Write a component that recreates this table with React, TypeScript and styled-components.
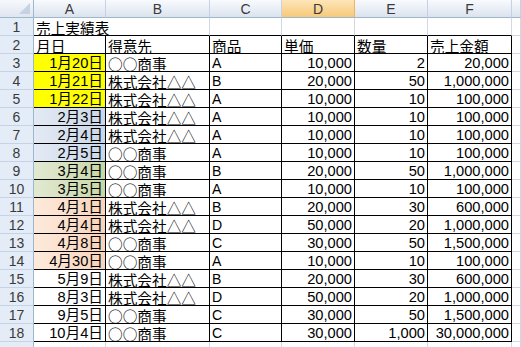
import React from 'react';
import styled, { createGlobalStyle } from 'styled-components';

const GlobalStyle = createGlobalStyle`
  html, body {
    margin: 0;
    padding: 0;
    background: #ffffff;
    overflow: hidden;
  }
`;

type Fill = 'yellow' | 'blue' | 'green' | 'peach' | undefined;

const fills: Record<string, string> = {
  yellow: '#ffff00',
  blue: 'linear-gradient(to right, #e3eaf4, #c9d7e9)',
  green: 'linear-gradient(to right, #e2e9d2, #c8d7a6)',
  peach: 'linear-gradient(to right, #fdeadc, #f9d4ba)',
};

const Sheet = styled.div`
  display: grid;
  grid-template-columns: 34px 72px 104px 72px 73px 73px 84px 1fr;
  grid-template-rows: 18px;
  grid-auto-rows: 18px;
  width: 521px;
  height: 347px;
  overflow: hidden;
  font-family: 'Liberation Sans', 'Noto Sans CJK JP', sans-serif;
  font-size: 14.67px;
  color: #000;
`;

const Corner = styled.div`
  position: relative;
  box-sizing: border-box;
  background: linear-gradient(#f6f8fc, #dfe6f0);
  border-right: 1px solid #9eb6ce;
  border-bottom: 1px solid #9eb6ce;
  svg {
    position: absolute;
    right: 3px;
    bottom: 3px;
  }
`;

const ColHead = styled.div<{ $active?: boolean }>`
  box-sizing: border-box;
  display: flex;
  align-items: center;
  justify-content: center;
  font-size: 14px;
  color: #3a3a3a;
  padding-top: 1px;
  background: ${(p) =>
    p.$active
      ? 'linear-gradient(#fde6b9, #f9d596 55%, #f6c978)'
      : 'linear-gradient(#f8fafd, #e8eef6 55%, #dbe3ee)'};
  border-right: 1px solid ${(p) => (p.$active ? '#f2b35a' : '#c5d2e3')};
  border-bottom: 1px solid #9eb6ce;
`;

const RowHead = styled.div`
  box-sizing: border-box;
  display: flex;
  align-items: center;
  justify-content: center;
  font-size: 14px;
  color: #3a3a3a;
  padding-top: 1px;
  background: #e4ecf7;
  border-right: 1px solid #9eb6ce;
  border-bottom: 1px solid #c5d3e5;
`;

const Cell = styled.div<{
  $fill?: Fill;
  $right?: boolean;
  $jp?: boolean;
  $line?: boolean;
  $under?: boolean;
  $span?: number;
}>`
  box-sizing: border-box;
  grid-column: ${(p) => (p.$span ? `span ${p.$span}` : 'auto')};
  padding: 1px 2px 0;
  line-height: 17px;
  white-space: nowrap;
  text-align: ${(p) => (p.$right ? 'right' : 'left')};
  font-family: ${(p) =>
    p.$jp
      ? "'Noto Sans CJK JP', 'Liberation Sans', sans-serif"
      : "'Liberation Sans', 'Noto Sans CJK JP', sans-serif"};
  background: ${(p) => (p.$fill ? fills[p.$fill] : '#ffffff')};
  border-right: 1px solid ${(p) => (p.$line ? '#000' : '#d0d7e5')};
  border-bottom: 1px solid ${(p) => (p.$line || p.$under ? '#000' : '#d0d7e5')};
`;

const Label = styled.span`
  display: inline-block;
  transform: scaleX(0.96);
  transform-origin: left center;
`;

const CornerMark = () => (
  <svg width="11" height="11" viewBox="0 0 11 11">
    <polygon points="11,0 11,11 0,11" fill="#c4d2e4" />
  </svg>
);

type Row = {
  date: string;
  fill?: Fill;
  client: string;
  item: string;
  price: string;
  qty: string;
  total: string;
};

const MARU = '○○商事';
const KABU = '株式会社△△';

const rows: Row[] = [
  { date: '1月20日', fill: 'yellow', client: MARU, item: 'A', price: '10,000', qty: '2', total: '20,000' },
  { date: '1月21日', fill: 'yellow', client: KABU, item: 'B', price: '20,000', qty: '50', total: '1,000,000' },
  { date: '1月22日', fill: 'yellow', client: KABU, item: 'A', price: '10,000', qty: '10', total: '100,000' },
  { date: '2月3日', fill: 'blue', client: KABU, item: 'A', price: '10,000', qty: '10', total: '100,000' },
  { date: '2月4日', fill: 'blue', client: KABU, item: 'A', price: '10,000', qty: '10', total: '100,000' },
  { date: '2月5日', fill: 'blue', client: MARU, item: 'A', price: '10,000', qty: '10', total: '100,000' },
  { date: '3月4日', fill: 'green', client: MARU, item: 'B', price: '20,000', qty: '50', total: '1,000,000' },
  { date: '3月5日', fill: 'green', client: MARU, item: 'A', price: '10,000', qty: '10', total: '100,000' },
  { date: '4月1日', fill: 'peach', client: KABU, item: 'B', price: '20,000', qty: '30', total: '600,000' },
  { date: '4月4日', fill: 'peach', client: KABU, item: 'D', price: '50,000', qty: '20', total: '1,000,000' },
  { date: '4月8日', fill: 'peach', client: MARU, item: 'C', price: '30,000', qty: '50', total: '1,500,000' },
  { date: '4月30日', fill: 'peach', client: MARU, item: 'A', price: '10,000', qty: '10', total: '100,000' },
  { date: '5月9日', client: KABU, item: 'B', price: '20,000', qty: '30', total: '600,000' },
  { date: '8月3日', client: KABU, item: 'D', price: '50,000', qty: '20', total: '1,000,000' },
  { date: '9月5日', client: MARU, item: 'C', price: '30,000', qty: '50', total: '1,500,000' },
  { date: '10月4日', client: MARU, item: 'C', price: '30,000', qty: '1,000', total: '30,000,000' },
];

const columns = ['A', 'B', 'C', 'D', 'E', 'F', ''];

const App = () => (
  <>
    <GlobalStyle />
    <Sheet>
      <Corner>
        <CornerMark />
      </Corner>
      {columns.map((c, i) => (
        <ColHead key={i} $active={c === 'D'}>
          {c}
        </ColHead>
      ))}

      <RowHead>1</RowHead>
      <Cell $jp $under $span={2}>
        売上実績表
      </Cell>
      <Cell $under />
      <Cell $under />
      <Cell $under />
      <Cell $under />
      <Cell />

      <RowHead>2</RowHead>
      <Cell $jp $line>月日</Cell>
      <Cell $jp $line>得意先</Cell>
      <Cell $jp $line>商品</Cell>
      <Cell $jp $line>単価</Cell>
      <Cell $jp $line>数量</Cell>
      <Cell $jp $line>売上金額</Cell>
      <Cell />

      {rows.map((r, i) => (
        <React.Fragment key={i}>
          <RowHead>{i + 3}</RowHead>
          <Cell $line $right $fill={r.fill}>{r.date}</Cell>
          <Cell $line $jp>{r.client}</Cell>
          <Cell $line>
            <Label>{r.item}</Label>
          </Cell>
          <Cell $line $right>{r.price}</Cell>
          <Cell $line $right>{r.qty}</Cell>
          <Cell $line $right>{r.total}</Cell>
          <Cell />
        </React.Fragment>
      ))}

      {/* row 19 only peeks in at the bottom edge */}
      <RowHead />
      {columns.map((_, i) => (
        <Cell key={i} />
      ))}
    </Sheet>
  </>
);

export default App;
